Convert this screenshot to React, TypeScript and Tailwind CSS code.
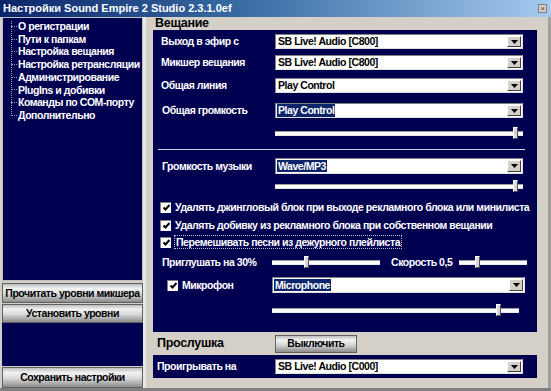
import React from "react";

const F = { fontFamily: "'Liberation Sans', Arial, sans-serif" };
const T = "text-[10.5px] font-bold tracking-[-0.45px] leading-none whitespace-nowrap";

function Arrow() {
  return (
    <div className="w-[14px] h-full bg-[#d4d0c8] border-l border-t border-l-white border-t-white border-r border-b border-r-[#404040] border-b-[#404040] flex items-center justify-center">
      <svg width="7" height="4" viewBox="0 0 7 4">
        <polygon points="0,0 7,0 3.5,4" fill="#000" />
      </svg>
    </div>
  );
}

function Combo({ text, sel, w = 248, h = 15 }: { text: string; sel?: boolean; w?: number; h?: number }) {
  return (
    <div
      className="bg-white flex items-stretch shrink-0 border-t border-l border-t-[#808080] border-l-[#808080] border-b border-r border-b-[#e0e0e0] border-r-[#e0e0e0]"
      style={{ width: w, height: h }}
    >
      <div className="flex-1 flex items-center pl-[1px]">
        <span className={`${T} py-[1px] px-[1px] ${sel ? "bg-[#0a246a] text-white" : "text-black"}`}>{text}</span>
      </div>
      <div className="p-[1px]">
        <Arrow />
      </div>
    </div>
  );
}

function Slider({ w, pos }: { w: number; pos: number }) {
  return (
    <div className="relative h-[14px] shrink-0" style={{ width: w }}>
      <div className="absolute left-0 right-0 top-[5px] h-[5px] bg-white border-t border-b border-t-[#a0a0a0] border-b-[#e8e8e8]" />
      <div
        className="absolute top-[1px] w-[5px] h-[12px] bg-[#d8d8d8] border border-l-white border-t-white border-r-[#505050] border-b-[#505050]"
        style={{ left: pos }}
      />
    </div>
  );
}

function Check() {
  return (
    <div className="w-[11px] h-[11px] bg-white border-t border-l border-t-[#808080] border-l-[#808080] flex items-center justify-center shrink-0">
      <svg width="9" height="9" viewBox="0 0 9 9">
        <polyline points="1.5,4.5 3.5,6.5 7.5,2" fill="none" stroke="#000" strokeWidth="2" />
      </svg>
    </div>
  );
}

function MetalBtn({ text, h, w }: { text: string; h: number; w?: number }) {
  return (
    <div
      className="flex items-center justify-center shrink-0 border border-[#606060] bg-[linear-gradient(to_bottom,#bdbdbd_0%,#f2f2f2_25%,#d8d8d8_55%,#8c8c8c_100%)]"
      style={{ height: h, width: w ?? "100%" }}
    >
      <span className={`${T} text-black`}>{text}</span>
    </div>
  );
}

const tree = [
  "О регистрации",
  "Пути к папкам",
  "Настройка вещания",
  "Настройка ретрансляции",
  "Администрирование",
  "PlugIns и добивки",
  "Команды по COM-порту",
  "Дополнительно",
];

export default function App() {
  return (
    <div className="w-[551px] h-[391px] bg-[#d4d0c8] flex flex-col overflow-hidden select-none" style={F}>
      {/* title bar */}
      <div className="h-[17px] flex items-center justify-between pl-[3px] pr-[4px] bg-[linear-gradient(to_right,#0a246a,#3a6ea5_45%,#a6caf0)]">
        <span className="text-white text-[11px] font-bold leading-none">Настройки Sound Empire 2 Studio 2.3.1.0ef</span>
        <div className="w-[9px] h-[9px] bg-[#d4d0c8] border border-[#808080] flex items-center justify-center text-[8px] leading-none text-[#404040]">×</div>
      </div>
      <div className="flex h-[371px] pl-[2px]">
        {/* left column */}
        <div className="w-[141px] flex flex-col">
          <div className="h-[264px] bg-[#000050] border border-[#c0c0c0] relative">
            <div className="absolute left-[8px] top-[3px] h-[93px] border-l border-dotted border-[#a0a0a0]" />
            <div className="flex flex-col pt-[2px]">
              {tree.map((t) => (
                <div key={t} className="h-[12.7px] flex items-center">
                  <div className="w-[6px] ml-[8px] shrink-0 border-t border-dotted border-[#a0a0a0]" />
                  <span className={`ml-[1px] text-white ${T}`}>{t}</span>
                </div>
              ))}
            </div>
          </div>
          <div className="mt-[2px]">
            <MetalBtn text="Прочитать уровни микшера" h={20} />
          </div>
          <div className="mt-[1px]">
            <MetalBtn text="Установить уровни" h={19} />
          </div>
          <div className="h-[43px] bg-[#000050]" />
          <div className="mt-[1px]">
            <MetalBtn text="Сохранить настройки" h={21} />
          </div>
        </div>
        <div className="w-[10px] border-l-[3px] border-[#e8e8e8]" />
        {/* right column */}
        <div className="w-[384px] flex flex-col">
          <div className="h-[13px] flex items-center pl-[2px]">
            <span className="text-[12.5px] font-bold text-black leading-none tracking-[-0.3px]">Вещание</span>
          </div>
          <div className="h-[302px] bg-[#000050] flex flex-col">
            <div className="flex items-center mt-[4px] h-[15px]">
              <span className={`w-[122px] pl-[8px] text-white ${T}`}>Выход в эфир с</span>
              <Combo text="SB Live! Audio [C800]" />
            </div>
            <div className="flex items-center mt-[6px] h-[15px]">
              <span className={`w-[122px] pl-[8px] text-white ${T}`}>Микшер вещания</span>
              <Combo text="SB Live! Audio [C800]" />
            </div>
            <div className="flex items-center mt-[8px] h-[15px]">
              <span className={`w-[122px] pl-[8px] text-white ${T}`}>Общая линия</span>
              <Combo text="Play Control" />
            </div>
            <div className="flex items-center mt-[10px] h-[15px]">
              <span className={`w-[122px] pl-[9px] text-white ${T}`}>Общая громкость</span>
              <Combo text="Play Control" sel />
            </div>
            <div className="flex mt-[8px] pl-[122px]">
              <Slider w={248} pos={238} />
            </div>
            <div className="mt-[9px] ml-[5px] w-[367px] h-[1px] bg-[#d0d0e0]" />
            <div className="flex items-center mt-[8px] h-[16px]">
              <span className={`w-[122px] pl-[9px] text-white ${T}`}>Громкость музыки</span>
              <Combo text="Wave/MP3" sel h={16} />
            </div>
            <div className="flex mt-[5px] pl-[122px]">
              <Slider w={248} pos={238} />
            </div>
            <div className="flex items-center mt-[7px] h-[14px] pl-[7px] gap-[4px]">
              <Check />
              <span className={`text-white ${T}`}>Удалять джингловый блок при выходе рекламного блока или минилиста</span>
            </div>
            <div className="flex items-center mt-[4px] h-[14px] pl-[7px] gap-[4px]">
              <Check />
              <span className={`text-white ${T}`}>Удалять добивку из рекламного блока при собственном вещании</span>
            </div>
            <div className="flex items-center mt-[3px] h-[14px] pl-[7px] gap-[3px]">
              <Check />
              <span className={`text-white ${T} border border-dotted border-[#c0c0c0] px-[1px] py-[1px]`}>Перемешивать песни из дежурного плейлиста</span>
            </div>
            <div className="flex items-center mt-[6px] h-[14px]">
              <span className={`w-[119px] pl-[9px] text-white ${T}`}>Приглушать на 30%</span>
              <Slider w={108} pos={32} />
              <span className={`ml-[11px] w-[68px] text-white ${T}`}>Скорость 0,5</span>
              <Slider w={68} pos={16} />
            </div>
            <div className="flex items-center mt-[8px] h-[16px]">
              <div className="w-[119px] pl-[14px] flex items-center gap-[4px]">
                <Check />
                <span className={`text-white ${T}`}>Микрофон</span>
              </div>
              <Combo text="Microphone" sel w={253} h={16} />
            </div>
            <div className="flex mt-[10px] pl-[119px]">
              <Slider w={247} pos={224} />
            </div>
          </div>
          <div className="h-[23px] flex items-center">
            <span className="w-[122px] pl-[4px] text-[12.5px] font-bold text-black tracking-[-0.3px]">Прослушка</span>
            <MetalBtn text="Выключить" h={18} w={82} />
          </div>
          <div className="h-[23px] bg-[#000050] flex items-center">
            <span className={`w-[122px] pl-[4px] text-white ${T}`}>Проигрывать на</span>
            <Combo text="SB Live! Audio [C000]" />
          </div>
        </div>
        <div className="flex-1 border-r-[3px] border-[#a0a0a0]" />
      </div>
      <div className="h-[3px] bg-[#808080]" />
    </div>
  );
}
